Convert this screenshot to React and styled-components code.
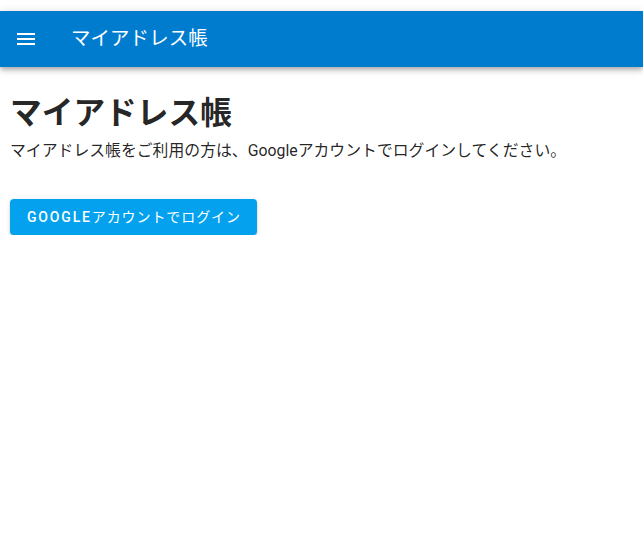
import React from "react";
import styled, { createGlobalStyle } from "styled-components";

const Global = createGlobalStyle`
  html, body { margin: 0; padding: 0; background: #fff; }
  body {
    font-family: Roboto, "Noto Sans CJK JP", "Noto Sans", sans-serif;
    color: rgba(0,0,0,0.87);
  }
`;

const Page = styled.div`
  padding-top: 11px;
`;

const AppBar = styled.header`
  height: 56px;
  background: #007ccf;
  color: #fff;
  display: flex;
  align-items: center;
  padding: 0 16px 0 14px;
  box-shadow: 0px 2px 4px -1px rgba(0,0,0,0.2), 0px 4px 5px 0px rgba(0,0,0,0.14), 0px 1px 10px 0px rgba(0,0,0,0.12);
`;

const MenuButton = styled.button`
  width: 24px;
  height: 24px;
  padding: 0;
  border: 0;
  background: none;
  color: inherit;
  display: flex;
  align-items: center;
  justify-content: center;
  margin-right: 33px;
`;

const Title = styled.h6`
  margin: 0;
  font-size: 19.4px;
  font-weight: 400;
  letter-spacing: 0.0075em;
  line-height: 1.6;
`;

const Main = styled.main`
  padding: 0 10px;
`;

const Heading = styled.h1`
  margin: 23px 0 0;
  font-size: 31.7px;
  font-weight: 700;
  line-height: 1.5;
`;

const Text = styled.p`
  margin: 1px 0 37px;
  font-size: 15.85px;
  line-height: 1.5;
`;

const Button = styled.button`
  font-family: Roboto, "Noto Sans CJK JP", sans-serif;
  font-size: 14px;
  font-weight: 500;
  letter-spacing: 0.13em;
  text-transform: uppercase;
  line-height: 1.75;
  padding: 6px 16px 6px 17px;
  height: 36px;
  border: 0;
  border-radius: 4px;
  background: #03a1ee;
  color: #fff;
  box-shadow: 0px 3px 1px -2px rgba(0,0,0,0.2), 0px 2px 2px 0px rgba(0,0,0,0.14), 0px 1px 5px 0px rgba(0,0,0,0.12);
  cursor: pointer;
`;

const Kana = styled.span`
  font-weight: 400;
  letter-spacing: 0.065em;
`;

export default function App() {
  return (
    <Page>
      <Global />
      <AppBar>
        <MenuButton aria-label="menu">
          <svg width="24" height="24" viewBox="0 0 24 24" fill="currentColor">
            <path d="M3 18h18v-2H3v2zm0-5h18v-2H3v2zm0-7v2h18V6H3z" />
          </svg>
        </MenuButton>
        <Title>マイアドレス帳</Title>
      </AppBar>
      <Main>
        <Heading>マイアドレス帳</Heading>
        <Text>マイアドレス帳をご利用の方は、Googleアカウントでログインしてください。</Text>
        <Button>Google<Kana>アカウントでログイン</Kana></Button>
      </Main>
    </Page>
  );
}
